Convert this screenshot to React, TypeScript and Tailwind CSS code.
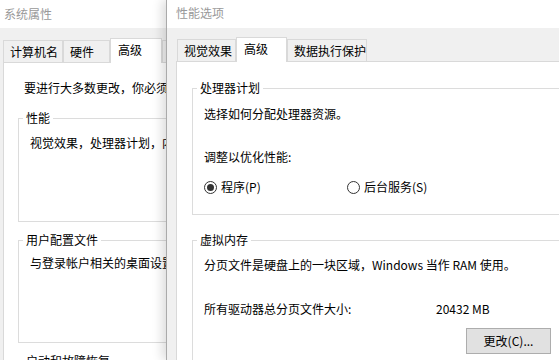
import type { ReactNode } from 'react';

const Tab = ({
  label,
  width,
  selected,
}: {
  label: string;
  width: number;
  selected?: boolean;
}) => (
  <div
    style={{ width }}
    className={
      selected
        ? 'relative z-10 -mb-px h-[25px] shrink-0 border border-b-0 border-[#d9d9d9] bg-white pl-[7px] pt-[3px] leading-[16px]'
        : 'h-[22px] shrink-0 border border-b-0 border-[#d9d9d9] bg-[#f0f0f0] pl-[6px] pt-[3px] leading-[16px]'
    }
  >
    {label}
  </div>
);

const Group = ({
  title,
  className,
  children,
}: {
  title: string;
  className?: string;
  children?: ReactNode;
}) => (
  <div className={`relative border border-[#dcdcdc] ${className ?? ''}`}>
    <span className="absolute -top-[9px] left-[4px] bg-white px-[3px] leading-[16px]">
      {title}
    </span>
    {children}
  </div>
);

const Radio = ({ checked, label }: { checked?: boolean; label: string }) => (
  <div className="flex w-[143px] items-center gap-[4px]">
    <span className="flex size-[13px] items-center justify-center rounded-full border border-[#333] bg-white">
      {checked && <span className="size-[7px] rounded-full bg-[#333]" />}
    </span>
    <span className="leading-[16px]">{label}</span>
  </div>
);

export default function App() {
  return (
    <div className="flex h-[360px] w-[559px] overflow-hidden bg-white text-[12px] text-black font-['Noto_Sans_CJK_SC','Microsoft_YaHei',sans-serif]">
      {/* 系统属性 (behind) */}
      <div className="flex w-[166px] shrink-0 flex-col overflow-hidden">
        <div className="h-[28px] shrink-0 bg-white pl-[4px] pt-[6px] leading-[16px] text-[#999]">
          系统属性
        </div>
        <div className="flex w-[420px] flex-1 flex-col bg-[#f0f0f0]">
          <div className="flex items-end pl-[3px] pt-[10px]">
            <Tab label="计算机名" width={60} />
            <Tab label="硬件" width={47} />
            <Tab label="高级" width={52} selected />
            <Tab label="远程" width={50} />
          </div>
          <div className="ml-[3px] flex-1 border border-[#d9d9d9] bg-white pl-[14px] pr-[20px]">
            <div className="ml-[6px] mt-[17px] whitespace-nowrap leading-[16px]">
              要进行大多数更改，你必须作为管理员登录。
            </div>
            <Group title="性能" className="mt-[22px] h-[104px]">
              <div className="ml-[11px] mt-[16px] whitespace-nowrap leading-[16px]">
                视觉效果，处理器计划，内存使用，以及虚拟内存
              </div>
            </Group>
            <Group title="用户配置文件" className="mt-[18px] h-[103px]">
              <div className="ml-[11px] mt-[14px] whitespace-nowrap leading-[16px]">
                与登录帐户相关的桌面设置
              </div>
            </Group>
            <Group title="启动和故障恢复" className="mt-[18px] h-[80px]" />
          </div>
        </div>
      </div>

      {/* 性能选项 (front) */}
      <div className="relative z-10 flex w-[410px] shrink-0 flex-col border-l border-[#aaa] shadow-[-4px_0_10px_rgba(0,0,0,0.14)]">
        <div className="h-[28px] shrink-0 bg-white pl-[9px] pt-[5px] leading-[16px] text-[#999]">
          性能选项
        </div>
        <div className="flex flex-1 flex-col bg-[#f0f0f0]">
          <div className="flex items-end pl-[10px] pt-[9px]">
            <Tab label="视觉效果" width={59} />
            <Tab label="高级" width={51} selected />
            <Tab label="数据执行保护" width={80} />
          </div>
          <div className="ml-[9px] flex-1 border border-[#d9d9d9] bg-white pl-[15px] pr-[8px]">
            <Group title="处理器计划" className="mt-[26px] pb-[19px] pl-[11px]">
              <div className="pt-[17px] leading-[16px]">选择如何分配处理器资源。</div>
              <div className="mt-[27px] leading-[16px]">调整以优化性能:</div>
              <div className="mt-[14px] flex h-[16px] items-center">
                <Radio checked label="程序(P)" />
                <Radio label="后台服务(S)" />
              </div>
            </Group>
            <Group title="虚拟内存" className="mt-[25px] h-[140px] pl-[11px]">
              <div className="pt-[16px] whitespace-nowrap leading-[16px]">
                分页文件是硬盘上的一块区域，Windows 当作 RAM 使用。
              </div>
              <div className="mt-[28px] flex leading-[16px]">
                <span className="w-[232px]">所有驱动器总分页文件大小:</span>
                <span>20432 MB</span>
              </div>
              <div className="mt-[11px] flex">
                <button className="ml-[262px] h-[26px] w-[85px] border border-[#adadad] bg-[#e1e1e1] leading-[16px]">
                  更改(C)...
                </button>
              </div>
            </Group>
          </div>
        </div>
      </div>
    </div>
  );
}
